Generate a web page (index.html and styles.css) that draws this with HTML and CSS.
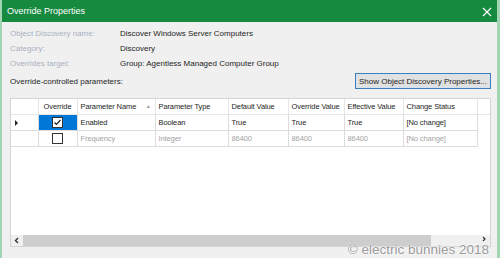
FILE: index.html
```html
<!DOCTYPE html>
<html lang="en">
<head>
    <meta charset="UTF-8">
    <title>Override Properties</title>
    <link rel="stylesheet" href="styles.css">
</head>
<body>
    <div class="window">
        <header class="titlebar">
            <span class="title">Override Properties</span>
            <svg class="close" width="10" height="10" viewBox="0 0 10 10">
                <path d="M1 1 L9 9 M9 1 L1 9" stroke="#fff" stroke-width="1.2"/>
            </svg>
        </header>

        <div class="content">
            <div class="info">
                <div class="label">Object Discovery name:</div>
                <div class="value">Discover Windows Server Computers</div>
                <div class="label">Category:</div>
                <div class="value">Discovery</div>
                <div class="label">Overrides target:</div>
                <div class="value">Group: Agentless Managed Computer Group</div>
            </div>

            <div class="params-bar">
                <span>Override-controlled parameters:</span>
                <button class="show-btn">Show Object Discovery Properties...</button>
            </div>

            <div class="grid">
                <table>
                    <colgroup>
                        <col style="width: 27px">
                        <col style="width: 39px">
                        <col style="width: 78px">
                        <col style="width: 73px">
                        <col style="width: 60px">
                        <col style="width: 56px">
                        <col style="width: 59px">
                        <col style="width: 74px">
                        <col>
                    </colgroup>
                    <thead>
                        <tr>
                            <th></th>
                            <th class="center">Override</th>
                            <th><span class="sort">Parameter Name <span class="arrow">&#9650;</span></span></th>
                            <th>Parameter Type</th>
                            <th>Default Value</th>
                            <th>Override Value</th>
                            <th>Effective Value</th>
                            <th>Change Status</th>
                            <th></th>
                        </tr>
                    </thead>
                    <tbody>
                        <tr>
                            <td class="rowhead"><span class="pointer"></span></td>
                            <td class="center selected"><span class="check on"><svg width="9" height="9" viewBox="0 0 9 9"><path d="M1.5 4.5 L3.5 6.5 L7.5 2" stroke="#222" stroke-width="1.2" fill="none"/></svg></span></td>
                            <td>Enabled</td>
                            <td>Boolean</td>
                            <td>True</td>
                            <td>True</td>
                            <td>True</td>
                            <td>[No change]</td>
                            <td class="blank"></td>
                        </tr>
                        <tr class="muted">
                            <td class="rowhead"></td>
                            <td class="center"><span class="check"></span></td>
                            <td>Frequency</td>
                            <td>Integer</td>
                            <td>86400</td>
                            <td>86400</td>
                            <td>86400</td>
                            <td>[No change]</td>
                            <td class="blank"></td>
                        </tr>
                    </tbody>
                </table>
                <div class="grid-space"></div>
                <div class="hscroll">
                    <span class="scroll-btn">
                        <svg width="12" height="11" viewBox="0 0 12 11"><path d="M7 3 L4.5 5.5 L7 8" stroke="#333" stroke-width="1.4" fill="none"/></svg>
                    </span>
                    <span class="thumb"></span>
                    <span class="track">
                        <svg width="12" height="11" viewBox="0 0 12 11"><path d="M5 2 L7 4 L5 6" stroke="#333" stroke-width="1.2" fill="none"/></svg>
                    </span>
                </div>
            </div>
        </div>

        <div class="watermark">&copy; electric bunnies 2018</div>
    </div>
</body>
</html>
```

FILE: styles.css
```css
body {
    margin: 0;
    font-family: 'Liberation Sans', Arial, sans-serif;
    background: #f0f0f0;
}

.window {
    position: relative;
    width: 500px;
    height: 258px;
    box-sizing: border-box;
    background: #f0f0f0;
    border-left: 2px solid #a3d4b3;
    border-right: 3px solid #a3d4b3;
    overflow: hidden;
}

.titlebar {
    display: flex;
    align-items: center;
    justify-content: space-between;
    height: 22px;
    margin: 0 -3px 0 -2px;
    padding: 0 8px 0 7px;
    background: #168a3f;
    color: #fff;
    font-size: 9px;
}

.close {
    margin-top: 1px;
}

.content {
    padding: 4px 6px 0 8px;
    font-size: 8px;
    color: #1e1e1e;
}

.info {
    display: grid;
    grid-template-columns: 110px auto;
    grid-auto-rows: 15px;
    align-items: center;
}

.label {
    color: #a9b0c0;
}

.params-bar {
    display: flex;
    align-items: center;
    justify-content: space-between;
    margin-top: 2px;
}

.show-btn {
    font-family: inherit;
    font-size: 8px;
    color: #1e1e1e;
    height: 16px;
    width: 136px;
    padding: 0;
    background: #e1e1e1;
    border: 1px solid #3d7fba;
    box-shadow: inset 0 0 0 1px #d5e3f1;
}

.grid {
    display: flex;
    flex-direction: column;
    margin-top: 9px;
    height: 149px;
    box-sizing: border-box;
    border: 1px solid #d4d4d4;
    background: #fff;
}

table {
    width: 100%;
    table-layout: fixed;
    border-collapse: collapse;
    font-size: 7.5px;
    letter-spacing: -0.1px;
}

th, td {
    height: 15px;
    padding: 0 0 0 3px;
    text-align: left;
    white-space: nowrap;
    overflow: hidden;
    font-weight: normal;
    border-right: 1px solid #dcdcdc;
    border-bottom: 1px solid #dcdcdc;
}

th {
    border-right-color: #e6e6e6;
    border-bottom-color: #e6e6e6;
}

th:last-child, td.blank {
    border-right: none;
}

td.blank {
    border-bottom: none;
}

.center {
    text-align: center;
    padding: 0;
}

.sort {
    display: flex;
    justify-content: space-between;
    padding-right: 4px;
}

.arrow {
    font-size: 5px;
    color: #9a9a9a;
    padding-top: 1px;
}

.rowhead {
    padding-left: 4px;
}

.pointer {
    display: inline-block;
    width: 0;
    height: 0;
    border-top: 3px solid transparent;
    border-bottom: 3px solid transparent;
    border-left: 3px solid #222;
    vertical-align: middle;
}

.selected {
    background: #0078d7;
}

.check {
    display: inline-block;
    width: 9px;
    height: 9px;
    border: 1px solid #333;
    background: #fff;
    vertical-align: middle;
}

.check svg {
    display: block;
}

.muted td {
    color: #a3a3a3;
}

.grid-space {
    flex: 1;
}

.hscroll {
    display: flex;
    height: 11px;
    background: #f0f0f0;
}

.scroll-btn svg, .track svg {
    display: block;
}

.thumb {
    width: 408px;
    background: #cdcdcd;
}

.track {
    flex: 1;
    display: flex;
    justify-content: flex-end;
}

.watermark {
    position: absolute;
    right: 8px;
    bottom: 1px;
    font-family: 'Liberation Sans', Arial, sans-serif;
    font-size: 13.5px;
    color: #9a9a9a;
    text-shadow: 0 0 2px #fff, 0 0 2px #fff;
}
```
